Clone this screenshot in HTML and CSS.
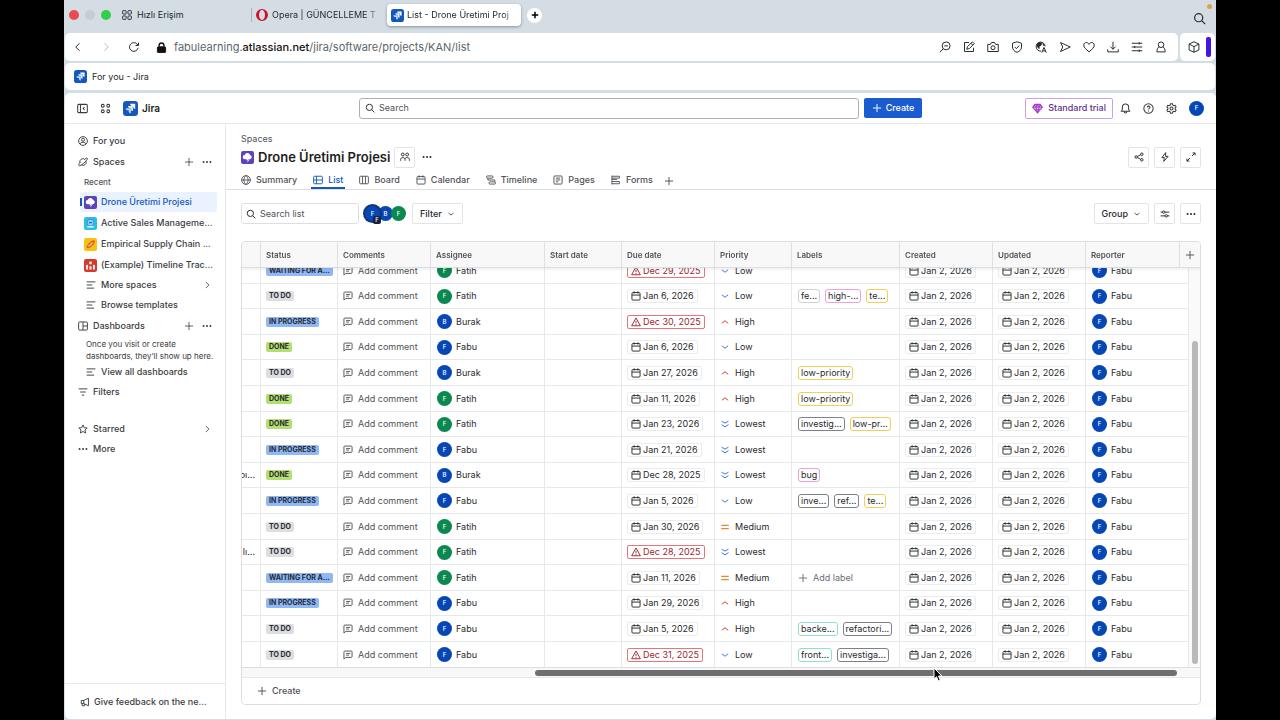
FILE: index.html
```html
<!DOCTYPE html>
<html lang="en">
<head>
    <meta charset="UTF-8">
    <meta name="viewport" content="width=device-width, initial-scale=1.0">
    <title>List - Drone Üretimi Projesi</title>
    <link rel="stylesheet" href="styles.css">
</head>
<body>
    <!-- icon sprite -->
    <svg class="sprite" xmlns="http://www.w3.org/2000/svg">
        <symbol id="i-tiles" viewBox="0 0 16 16"><rect x="1" y="1" width="5.5" height="5.5" rx="1"/><rect x="9.500" y="1" width="5.500" height="5.500" rx="1"/><rect x="1" y="9.500" width="5.500" height="5.500" rx="1"/><rect x="9.500" y="9.500" width="5.500" height="5.500" rx="1"/></symbol>
        <symbol id="i-apps" viewBox="0 0 16 16"><rect x="2" y="2" width="4" height="4" rx="1.500"/><rect x="10" y="2" width="4" height="4" rx="1.500"/><rect x="2" y="10" width="4" height="4" rx="1.500"/><rect x="10" y="10" width="4" height="4" rx="1.500"/></symbol>
        <symbol id="i-jira" viewBox="0 0 16 16"><rect width="16" height="16" rx="3.500" fill="#1558bc" stroke="none"/><g fill="#fff" stroke="none"><path d="M7.600 3h5.400v5.400c-1.300 0-2.200-.9-2.200-2.200v-.9h-1c-1.300 0-2.200-1-2.200-2.300z"/><path d="M5.300 5.300h5.300v5.400c-1.300 0-2.200-1-2.200-2.200v-1h-.9c-1.300 0-2.200-.9-2.200-2.200z" opacity=".85"/><path d="M3 7.600h5.400V13c-1.300 0-2.300-1-2.300-2.200v-1h-.9C3.900 9.800 3 8.900 3 7.600z" opacity=".75"/></g></symbol>
        <symbol id="i-search" viewBox="0 0 16 16"><circle cx="7" cy="7" r="5"/><path d="M11 11l4 4"/></symbol>
        <symbol id="i-left" viewBox="0 0 16 16"><path d="M10 3L5 8l5 5"/></symbol>
        <symbol id="i-right" viewBox="0 0 16 16"><path d="M6 3l5 5-5 5"/></symbol>
        <symbol id="i-down" viewBox="0 0 16 16"><path d="M3 6l5 4 5-4"/></symbol>
        <symbol id="i-up" viewBox="0 0 16 16"><path d="M3 10l5-4 5 4"/></symbol>
        <symbol id="i-lowest" viewBox="0 0 16 16"><path d="M2.500 3.500l5.500 3 5.500-3M2.500 9l5.500 3.500L13.500 9"/></symbol>
        <symbol id="i-equal" viewBox="0 0 16 16"><path d="M2 5.500h12M2 10.500h12"/></symbol>
        <symbol id="i-reload" viewBox="0 0 16 16"><path d="M13.500 9A5.800 5.800 0 1 1 12 4l1.500 1.500M14 2v4h-4"/></symbol>
        <symbol id="i-lock" viewBox="0 0 16 16"><rect x="2" y="7" width="12" height="8.500" rx="1.500" fill="currentColor"/><path d="M4.500 7V5a3.500 3.500 0 0 1 7 0v2" stroke-width="2"/></symbol>
        <symbol id="i-zoomout" viewBox="0 0 16 16"><circle cx="9.500" cy="6.500" r="5.300"/><path d="M5.500 10.500L1 15M7 6.500h5"/></symbol>
        <symbol id="i-note" viewBox="0 0 16 16"><path d="M8 2H2v12h12V9"/><path d="M5 11l1-3.500L12.500 1 15 3.500 8.500 10zM10.500 3l2.500 2.500"/></symbol>
        <symbol id="i-camera" viewBox="0 0 16 16"><path d="M1 4.500h3.500L6 2h4l1.500 2.500H15V14H1z"/><circle cx="8" cy="9" r="2.700"/></symbol>
        <symbol id="i-shield" viewBox="0 0 16 16"><path d="M8 1l6 2v5c0 3.500-2.500 6-6 7-3.500-1-6-3.500-6-7V3z"/><path d="M5 8l2.200 2.200L11 6"/></symbol>
        <symbol id="i-translate" viewBox="0 0 16 16"><path d="M8 13.500A6 6 0 1 1 13.500 7"/><path d="M3 3l4-1.500 2.500 2L8 6 6 7l-.5 3.500L2.500 7zM10.500 3l2.500 3h-2z" fill="currentColor" stroke-width=".6"/><path d="M9 15.500l3-7 3 7M10 13.200h4"/></symbol>
        <symbol id="i-send" viewBox="0 0 16 16"><path d="M2 2l13 6-13 6 3-6z"/></symbol>
        <symbol id="i-heart" viewBox="0 0 16 16"><path d="M8 14.500C4 11 1 8.800 1 5.500 1 3.300 2.600 2 4.300 2 6 2 7.300 3 8 4.500 8.700 3 10 2 11.700 2 13.400 2 15 3.300 15 5.500c0 3.300-3 5.500-7 9z"/></symbol>
        <symbol id="i-download" viewBox="0 0 16 16"><path d="M8 1v10M4.500 7.500L8 11l3.500-3.500M1 11v3.500h14V11"/></symbol>
        <symbol id="i-sliders" viewBox="0 0 16 16"><path d="M1 3h14M1 8h14M1 13h14M11 1.500v3M5 6.500v3M11 11.500v3"/></symbol>
        <symbol id="i-user" viewBox="0 0 16 16"><circle cx="8" cy="5" r="3.700"/><path d="M5.500 8C3.500 9 2.500 11 2.500 14.500h11C13.500 11 12.500 9 10.500 8"/></symbol>
        <symbol id="i-cube" viewBox="0 0 16 16"><path d="M8 1l6.500 3v8L8 15l-6.500-3V4zM1.500 4L8 7.500 14.500 4M8 7.500V15"/></symbol>
        <symbol id="i-collapse" viewBox="0 0 16 16"><rect x="1" y="2" width="14" height="12" rx="1.500"/><path d="M5 2v12M11 6L9 8l2 2"/></symbol>
        <symbol id="i-plus" viewBox="0 0 16 16"><path d="M8 1.500v13M1.500 8h13"/></symbol>
        <symbol id="i-dots" viewBox="0 0 16 16"><g fill="currentColor" stroke="none"><circle cx="2.500" cy="8" r="1.600"/><circle cx="8" cy="8" r="1.600"/><circle cx="13.500" cy="8" r="1.600"/></g></symbol>
        <symbol id="i-gem" viewBox="0 0 16 16"><path d="M4 2h8l3 4-7 8.500L1 6zM1 6h14M5.500 6L8 14l2.500-8L8 2zM4 2l1.500 4M12 2l-1.500 4M3 9h10"/></symbol>
        <symbol id="i-bell" viewBox="0 0 16 16"><path d="M8 1.500c-3 0-4.500 2-4.500 4.500v3L2 12h12l-1.500-3V6c0-2.500-1.500-4.500-4.500-4.500zM6 12.500c0 2.800 4 2.800 4 0"/></symbol>
        <symbol id="i-help" viewBox="0 0 16 16"><circle cx="8" cy="8" r="6.800"/><path d="M6 6.500C6 3.800 10.200 4 10.200 6.300 10.200 8 8 7.800 8 9.500M8 11v1.300"/></symbol>
        <symbol id="i-gear" viewBox="0 0 16 16"><path d="M6.700 1h2.600l.6 2 1.500.9 2-.5 1.300 2.200L13.300 7v2l1.400 1.400-1.300 2.200-2-.5-1.500.9-.6 2H6.700l-.6-2-1.500-.9-2 .5-1.300-2.200L2.700 9V7L1.300 5.600l1.300-2.200 2 .5L6.100 3z"/><circle cx="8" cy="8" r="2.200"/></symbol>
        <symbol id="i-person" viewBox="0 0 16 16"><circle cx="8" cy="8" r="7"/><circle cx="8" cy="6" r="2.400"/><path d="M3.500 13c0-4 9-4 9 0"/></symbol>
        <symbol id="i-planet" viewBox="0 0 16 16"><path d="M3.200 9.500A5 5 0 0 1 11.500 4.300M13 7a5 5 0 0 1-7.500 5.500"/><path d="M3.500 8.500C1 11.500.5 13.500 2 14c2.500.5 12-7.500 13-11 .3-1.700-1.500-1.500-3.500-.3"/></symbol>
        <symbol id="i-lines" viewBox="0 0 16 16"><path d="M1 3h14M1 8h9M1 13h12"/></symbol>
        <symbol id="i-dash" viewBox="0 0 16 16"><rect x="1" y="1.500" width="14" height="13" rx="1.500"/><path d="M8 1.500v13M8 8h7"/></symbol>
        <symbol id="i-filters" viewBox="0 0 16 16"><path d="M1 3h14M3.500 8h9M6 13h4"/></symbol>
        <symbol id="i-star" viewBox="0 0 16 16"><path d="M8 1.500l2 4.400 4.700.5-3.500 3.200 1 4.800L8 12l-4.200 2.400 1-4.800L1.300 6.400 6 5.900z"/></symbol>
        <symbol id="i-horn" viewBox="0 0 16 16"><path d="M2 5.500h4L13.500 2v12L6 10.500H2zM3.500 10.500V14h4v-3M6 5.500v5"/></symbol>
        <symbol id="i-cloud" viewBox="0 0 16 16"><rect width="16" height="16" rx="2.500" fill="#5e42b8" stroke="none"/><path d="M4.800 10a2.500 2.500 0 0 1-.3-5 3.600 3.600 0 0 1 6.700-.2A2.700 2.700 0 0 1 11.300 10z" fill="#fff" stroke="none"/><path d="M8.700 8.500L6.500 11.500h2l-1 3 3-4h-2z" fill="#fff" stroke="none"/></symbol>
        <symbol id="i-sales" viewBox="0 0 16 16"><rect width="16" height="16" rx="2.500" fill="#2bc0dc" stroke="none"/><circle cx="8" cy="7" r="4.300" fill="#8fd3f5" stroke="#1d7afc" stroke-width="1"/><path d="M4 11h8v2H4z" fill="#dff7fc" stroke="none"/><path d="M6 7h4" stroke="#1868db"/></symbol>
        <symbol id="i-supply" viewBox="0 0 16 16"><rect width="16" height="16" rx="2.500" fill="#fbc014" stroke="none"/><path d="M4 12c-1-3 5-9 8.500-8.500C13.500 7 7 13 4 12z" fill="#f5803e" stroke="#bf4a12" stroke-width="1"/><path d="M6 10l4.500-4.500" stroke="#ffe2bd" stroke-width="1"/></symbol>
        <symbol id="i-example" viewBox="0 0 16 16"><rect width="16" height="16" rx="2.500" fill="#d33b30" stroke="none"/><path d="M2.500 13V7.500L5 7v6zM6.700 13V9h2.600v4zM11 13V7l2.500.5V13z" fill="#ffe9e6" stroke="none"/><circle cx="8" cy="5" r="1.800" fill="#ffe9e6" stroke="none"/></symbol>
        <symbol id="i-people" viewBox="0 0 16 16"><circle cx="4.500" cy="4" r="2.300"/><circle cx="11.500" cy="4" r="2.300"/><path d="M1 14v-2c0-4 7-4 7 0v2M8 11c.5-3 7-3 7 1v2"/></symbol>
        <symbol id="i-globe" viewBox="0 0 16 16"><circle cx="8" cy="8" r="7"/><path d="M1 8h14M8 1c-4.500 4-4.500 10 0 14 4.500-4 4.500-10 0-14z"/></symbol>
        <symbol id="i-table" viewBox="0 0 16 16"><rect x="1" y="2" width="14" height="12" rx="1.500"/><path d="M1 8h14M5.500 2v12"/></symbol>
        <symbol id="i-board" viewBox="0 0 16 16"><rect x="1" y="2" width="14" height="12" rx="1.500"/><path d="M5.700 2v12M10.300 2v12"/></symbol>
        <symbol id="i-cal" viewBox="0 0 16 16"><rect x="1.500" y="2.500" width="13" height="12" rx="1.500"/><path d="M1.500 6.500h13M5 .5v3.500M11 .5v3.500"/></symbol>
        <symbol id="i-timeline" viewBox="0 0 16 16"><rect x="1" y="1.500" width="10" height="3.500" rx="1"/><rect x="5" y="11" width="10" height="3.500" rx="1"/><path d="M3 5v3h11v3"/></symbol>
        <symbol id="i-page" viewBox="0 0 16 16"><rect x="1.500" y="1.500" width="13" height="13" rx="1.500"/><path d="M4.500 5h7M4.500 8h7M4.500 11h4"/></symbol>
        <symbol id="i-form" viewBox="0 0 16 16"><path d="M1.500 1v14M1.500 2h12v3h-12M1.500 7h8M1.500 10.500h12v3.500h-12"/></symbol>
        <symbol id="i-share" viewBox="0 0 16 16"><circle cx="3.500" cy="8" r="2"/><circle cx="12.500" cy="3.500" r="2"/><circle cx="12.500" cy="12.500" r="2"/><path d="M5.500 7l5-2.500M5.500 9l5 2.500"/></symbol>
        <symbol id="i-bolt" viewBox="0 0 16 16"><path d="M9 1L3 9h4l-1 6 7-8H9z"/></symbol>
        <symbol id="i-expand" viewBox="0 0 16 16"><path d="M9.500 6.500L14.500 1.500M10.500 1.500h4v4M6.500 9.500L1.500 14.500M1.500 10.500v4h4"/></symbol>
        <symbol id="i-tune" viewBox="0 0 16 16"><path d="M1 5h3M8 5h7M1 11h7M12 11h3"/><circle cx="6" cy="5" r="2"/><circle cx="10" cy="11" r="2"/></symbol>
        <symbol id="i-comment" viewBox="0 0 16 16"><path d="M1.500 14.500V3c0-.8.500-1.300 1.300-1.300h10.400c.8 0 1.300.5 1.300 1.300v7.500c0 .8-.5 1.300-1.300 1.300H4.300zM5 5.500h6.500M5 8.200h4.500"/></symbol>
        <symbol id="i-warn" viewBox="0 0 16 16"><path d="M8 1.500l7 12.500H1zM8 6v4M8 11v1.500"/></symbol>
    </svg>

    <header class="tabs-bar">
        <div class="lights"><i class="red"></i><i></i><i class="green"></i></div>
        <a class="browser-tab" href="#"><svg class="icon"><use href="#i-tiles"/></svg><span>Hızlı Erişim</span></a>
        <a class="browser-tab divided" href="#"><i class="opera"></i><span>Opera | GÜNCELLEME T</span></a>
        <a class="browser-tab active" href="#"><svg class="icon logo"><use href="#i-jira"/></svg><span>List - Drone Üretimi Proj</span></a>
        <button class="new-tab" aria-label="New tab"><svg class="icon"><use href="#i-plus"/></svg></button>
        <button class="tab-search" aria-label="Search tabs"><svg class="icon"><use href="#i-search"/></svg></button>
        <i class="mic-dot"></i>
    </header>

    <div class="address-row">
        <div class="address">
            <button aria-label="Back"><svg class="icon"><use href="#i-left"/></svg></button>
            <button class="off" aria-label="Forward"><svg class="icon"><use href="#i-right"/></svg></button>
            <button aria-label="Reload"><svg class="icon"><use href="#i-reload"/></svg></button>
            <svg class="icon lock"><use href="#i-lock"/></svg>
            <div class="url">fabulearning.<b>atlassian.net</b>/jira/software/projects/KAN/list</div>
            <div class="tools" id="tools"></div>
        </div>
        <div class="address-side">
            <button aria-label="Extensions"><svg class="icon"><use href="#i-cube"/></svg></button>
            <i class="side-bar"></i>
        </div>
    </div>

    <nav class="bookmarks">
        <a href="#"><svg class="icon logo"><use href="#i-jira"/></svg>For you - Jira</a>
    </nav>

    <div class="app">
        <header class="app-header">
            <div class="header-left">
                <button aria-label="Collapse sidebar"><svg class="icon"><use href="#i-collapse"/></svg></button>
                <button aria-label="Switch apps"><svg class="icon"><use href="#i-apps"/></svg></button>
                <a class="brand" href="#"><svg class="icon"><use href="#i-jira"/></svg>Jira</a>
            </div>
            <label class="field global-search"><svg class="icon"><use href="#i-search"/></svg><input type="text" placeholder="Search" aria-label="Search"></label>
            <button class="create"><svg class="icon"><use href="#i-plus"/></svg>Create</button>
            <div class="header-right">
                <button class="trial"><svg class="icon"><use href="#i-gem"/></svg>Standard trial</button>
                <button aria-label="Notifications"><svg class="icon"><use href="#i-bell"/></svg></button>
                <button aria-label="Help"><svg class="icon"><use href="#i-help"/></svg></button>
                <button aria-label="Settings"><svg class="icon"><use href="#i-gear"/></svg></button>
                <span class="avatar">F</span>
            </div>
        </header>

        <div class="app-body">
            <aside class="sidebar">
                <nav class="side-nav">
                    <a class="item" href="#"><svg class="icon"><use href="#i-person"/></svg>For you</a>
                    <div class="item"><svg class="icon"><use href="#i-planet"/></svg><a href="#">Spaces</a>
                        <span class="actions"><button aria-label="Create space"><svg class="icon"><use href="#i-plus"/></svg></button><button aria-label="More actions"><svg class="icon"><use href="#i-dots"/></svg></button></span>
                    </div>
                    <div class="recent">Recent</div>
                    <div class="projects">
                        <a class="item selected" href="#"><svg class="icon"><use href="#i-cloud"/></svg>Drone Üretimi Projesi</a>
                        <a class="item" href="#"><svg class="icon"><use href="#i-sales"/></svg>Active Sales Manageme...</a>
                        <a class="item" href="#"><svg class="icon"><use href="#i-supply"/></svg>Empirical Supply Chain ...</a>
                        <a class="item" href="#"><svg class="icon"><use href="#i-example"/></svg>(Example) Timeline Trac...</a>
                    </div>
                    <a class="item sub" href="#"><svg class="icon"><use href="#i-lines"/></svg>More spaces<span class="actions"><svg class="icon"><use href="#i-right"/></svg></span></a>
                    <a class="item sub" href="#"><svg class="icon"><use href="#i-lines"/></svg>Browse templates</a>
                    <div class="item"><svg class="icon"><use href="#i-dash"/></svg><a href="#">Dashboards</a>
                        <span class="actions"><button aria-label="Create dashboard"><svg class="icon"><use href="#i-plus"/></svg></button><button aria-label="More actions"><svg class="icon"><use href="#i-dots"/></svg></button></span>
                    </div>
                    <p class="hint">Once you visit or create dashboards, they’ll show up here.</p>
                    <a class="item sub" href="#"><svg class="icon"><use href="#i-lines"/></svg>View all dashboards</a>
                    <a class="item" href="#"><svg class="icon"><use href="#i-filters"/></svg>Filters</a>
                    <div class="nav-group">
                        <a class="item" href="#"><svg class="icon"><use href="#i-star"/></svg>Starred<span class="actions"><svg class="icon"><use href="#i-right"/></svg></span></a>
                        <a class="item" href="#"><svg class="icon"><use href="#i-dots"/></svg>More</a>
                    </div>
                </nav>
                <a class="feedback" href="#"><svg class="icon"><use href="#i-horn"/></svg>Give feedback on the ne...</a>
            </aside>

            <main>
                <div class="crumb"><a href="#">Spaces</a></div>
                <div class="title-row">
                    <svg class="icon space-icon"><use href="#i-cloud"/></svg>
                    <h1>Drone Üretimi Projesi</h1>
                    <button class="btn square" aria-label="Team"><svg class="icon"><use href="#i-people"/></svg></button>
                    <button class="more" aria-label="More"><svg class="icon"><use href="#i-dots"/></svg></button>
                    <div class="right">
                        <button class="btn square" aria-label="Share"><svg class="icon"><use href="#i-share"/></svg></button>
                        <button class="btn square" aria-label="Automation"><svg class="icon"><use href="#i-bolt"/></svg></button>
                        <button class="btn square" aria-label="Full screen"><svg class="icon"><use href="#i-expand"/></svg></button>
                    </div>
                </div>
                <nav class="view-tabs">
                    <a href="#"><svg class="icon"><use href="#i-globe"/></svg>Summary</a>
                    <a class="active" href="#"><svg class="icon"><use href="#i-table"/></svg>List</a>
                    <a href="#"><svg class="icon"><use href="#i-board"/></svg>Board</a>
                    <a href="#"><svg class="icon"><use href="#i-cal"/></svg>Calendar</a>
                    <a href="#"><svg class="icon"><use href="#i-timeline"/></svg>Timeline</a>
                    <a href="#"><svg class="icon"><use href="#i-page"/></svg>Pages</a>
                    <a href="#"><svg class="icon"><use href="#i-form"/></svg>Forms</a>
                    <button aria-label="Add view"><svg class="icon"><use href="#i-plus"/></svg></button>
                </nav>

                <div class="toolbar">
                    <label class="field list-search"><svg class="icon"><use href="#i-search"/></svg><input type="text" placeholder="Search list" aria-label="Search list"></label>
                    <div class="people">
                        <span class="avatar picked">F<em>F</em></span><span class="avatar">B</span><span class="avatar green">F</span>
                    </div>
                    <button class="btn">Filter<svg class="icon small"><use href="#i-down"/></svg></button>
                    <div class="right">
                        <button class="btn">Group<svg class="icon small"><use href="#i-down"/></svg></button>
                        <button class="btn square" aria-label="View settings"><svg class="icon"><use href="#i-tune"/></svg></button>
                        <button class="btn square" aria-label="More"><svg class="icon"><use href="#i-dots"/></svg></button>
                    </div>
                </div>

                <section class="list">
                    <div class="scroller" id="scroller">
                        <table>
                            <colgroup>
                                <col class="c-first"><col class="c-status"><col class="c-date"><col class="c-assignee"><col class="c-status"><col class="c-date"><col class="c-status"><col class="c-labels"><col class="c-date"><col class="c-date"><col><col class="c-add">
                            </colgroup>
                            <thead>
                                <tr><th></th><th>Status</th><th>Comments</th><th>Assignee</th><th>Start date</th><th>Due date</th><th>Priority</th><th>Labels</th><th>Created</th><th>Updated</th><th>Reporter</th><th class="add"><button aria-label="Add column"><svg class="icon"><use href="#i-plus"/></svg></button></th></tr>
                            </thead>
                            <tbody id="rows"></tbody>
                        </table>
                    </div>
                    <div class="v-track"><i></i></div>
                    <div class="h-track"><i></i></div>
                    <div class="list-footer"><button><svg class="icon"><use href="#i-plus"/></svg>Create</button></div>
                    <svg class="pointer" viewBox="0 0 10 15"><path d="M1 1v11l2.500-2.300L5.200 13.800l2-.9L5.500 9H9z"/></svg>
                </section>
            </main>
        </div>
    </div>

    <script>
        const icon = (name, cls = '') => `<svg class="icon ${cls}"><use href="#i-${name}"/></svg>`;

        const tools = ['zoomout', 'note', 'camera', 'shield', 'translate', 'send', 'heart', 'download', 'sliders', 'user'];
        document.getElementById('tools').innerHTML = tools
            .map(name => `<button aria-label="${name}">${icon(name)}</button>`).join('');

        // status, assignee, due date, overdue, priority, labels as "colour:text", end of the summary
        const issues = [
            ['WAITING FOR A...', 'Fatih', 'Dec 29, 2025', true, 'Low', []],
            ['TO DO', 'Fatih', 'Jan 6, 2026', false, 'Low', ['plain:fe...', 'pink:high-...', 'yellow:te...']],
            ['IN PROGRESS', 'Burak', 'Dec 30, 2025', true, 'High', []],
            ['DONE', 'Fabu', 'Jan 6, 2026', false, 'Low', []],
            ['TO DO', 'Burak', 'Jan 27, 2026', false, 'High', ['yellow:low-priority']],
            ['DONE', 'Fatih', 'Jan 11, 2026', false, 'High', ['yellow:low-priority']],
            ['DONE', 'Fatih', 'Jan 23, 2026', false, 'Lowest', ['dark:investig...', 'yellow:low-pr...']],
            ['IN PROGRESS', 'Fabu', 'Jan 21, 2026', false, 'Lowest', []],
            ['DONE', 'Burak', 'Dec 28, 2025', false, 'Lowest', ['pink:bug'], 'oı...'],
            ['IN PROGRESS', 'Fabu', 'Jan 5, 2026', false, 'Low', ['dark:inve...', 'dark:ref...', 'yellow:te...']],
            ['TO DO', 'Fatih', 'Jan 30, 2026', false, 'Medium', []],
            ['TO DO', 'Fatih', 'Dec 28, 2025', true, 'Lowest', [], 'lı...'],
            ['WAITING FOR A...', 'Fatih', 'Jan 11, 2026', false, 'Medium', null],
            ['IN PROGRESS', 'Fabu', 'Jan 29, 2026', false, 'High', []],
            ['TO DO', 'Fabu', 'Jan 5, 2026', false, 'High', ['teal:backe...', 'dark:refactori...']],
            ['TO DO', 'Fabu', 'Dec 31, 2025', true, 'Low', ['teal:front...', 'dark:investiga...']]
        ];

        const statusClass = { 'TO DO': 'todo', 'DONE': 'done' };
        const priorityIcon = { Low: 'down', High: 'up', Lowest: 'lowest', Medium: 'equal' };

        const person = name => `<div class="cell person"><span class="avatar ${name === 'Fatih' ? 'green' : ''}">${name[0]}</span>${name}</div>`;
        const date = (text, late) => `<div class="cell"><span class="date ${late ? 'late' : ''}">${icon(late ? 'warn' : 'cal')}${text}</span></div>`;

        function labels(list) {
            if (!list) return `<button class="add-label">${icon('plus')}Add label</button>`;
            return list.map(item => {
                const [colour, text] = item.split(':');
                return `<span class="label ${colour}">${text}</span>`;
            }).join('');
        }

        document.getElementById('rows').innerHTML = issues.map(([status, who, due, late, priority, tags, tail = '']) => `
            <tr>
                <td><div class="tail">${tail}</div></td>
                <td><div class="cell"><span class="lozenge ${statusClass[status] || 'progress'}">${status}</span></div></td>
                <td><button class="cell comment">${icon('comment')}Add comment</button></td>
                <td>${person(who)}</td>
                <td></td>
                <td>${date(due, late)}</td>
                <td><div class="cell priority ${priority.toLowerCase()}">${icon(priorityIcon[priority])}${priority}</div></td>
                <td><div class="cell labels">${labels(tags)}</div></td>
                <td>${date('Jan 2, 2026')}</td>
                <td>${date('Jan 2, 2026')}</td>
                <td colspan="2">${person('Fabu')}</td>
            </tr>`).join('');

        document.getElementById('scroller').scrollTop = 10;
    </script>
</body>
</html>
```
FILE: styles.css
```css
* {
    box-sizing: border-box;
}

body {
    font-family: Inter, "Noto Sans", sans-serif;
    font-size: 9px;
    line-height: 12px;
    color: #292a2e;
    background: linear-gradient(90deg, #000 5%, #d3dde3 5%, #d3dde3 95%, #000 95%);
    margin: 0;
    padding: 0 5%;
    height: 100vh;
    display: flex;
    flex-direction: column;
    overflow: hidden;
}

a {
    color: inherit;
    text-decoration: none;
}

button,
input {
    font: inherit;
    color: inherit;
    background: none;
    border: none;
    padding: 0;
    margin: 0;
}

button {
    display: flex;
    align-items: center;
    justify-content: center;
}

.sprite {
    display: none;
}

.icon {
    width: 10px;
    height: 10px;
    flex: none;
    fill: none;
    stroke: currentColor;
    stroke-width: 1.5;
}

.icon.small {
    width: 8px;
    height: 8px;
}

.icon.logo {
    width: 13px;
    height: 13px;
}

/* browser */
.tabs-bar {
    display: flex;
    align-items: center;
    height: 33px;
    padding: 0 4px 3px 5px;
    flex: none;
    position: relative;
}

.lights {
    display: flex;
    gap: 6px;
    margin-right: 6px;
}

.lights i {
    width: 10px;
    height: 10px;
    border-radius: 50%;
    background: #c6cccf;
}

.lights .red {
    background: #ec4a4c;
}

.lights .green {
    background: #2fd04b;
}

.browser-tab {
    display: flex;
    align-items: center;
    gap: 5px;
    width: 134px;
    height: 22px;
    padding: 0 5px;
    color: #24292c;
}

.browser-tab span {
    flex: 1;
    white-space: nowrap;
}

.browser-tab.divided {
    gap: 4px;
}

.browser-tab.divided span,
.browser-tab.active span {
    -webkit-mask-image: linear-gradient(90deg, #000 88%, transparent);
    mask-image: linear-gradient(90deg, #000 88%, transparent);
}

.browser-tab.divided::before {
    content: "";
    width: 1px;
    height: 14px;
    margin-left: -5px;
    background: #aab3b8;
}

.browser-tab.active {
    margin-left: 2px;
    background: #fff;
    border-radius: 4px;
    padding: 0 4px;
    gap: 3px;
    box-shadow: 0 1px 3px rgba(0, 0, 0, 0.35);
}

.opera {
    width: 12px;
    height: 12px;
    border: solid #d0112b;
    border-width: 1px 3px;
    border-radius: 50%;
}

.new-tab {
    width: 15px;
    height: 15px;
    margin-left: 6px;
    border-radius: 50%;
    background: #fff;
    color: #000;
}

.new-tab .icon {
    width: 8px;
    height: 8px;
    stroke-width: 3;
}

.tab-search {
    margin: 6px 6px 0 auto;
}

.tab-search .icon {
    width: 13px;
    height: 13px;
}

.mic-dot {
    position: absolute;
    top: 4px;
    right: 4px;
    width: 5px;
    height: 5px;
    border-radius: 50%;
    background: #dfa04e;
}

.address-row {
    display: flex;
    gap: 2px;
    height: 28px;
    margin: 0 1px 2px;
    flex: none;
}

.address,
.address-side {
    display: flex;
    align-items: center;
    background: #fff;
    border-radius: 5px;
    color: #24292c;
}

.address {
    flex: 1;
    gap: 16px;
    padding: 0 11px 0 7px;
}

.address .icon,
.address-side .icon {
    width: 12px;
    height: 12px;
    stroke-width: 1.3;
}

.address .off {
    color: #b4b9bc;
}

.address .lock {
    width: 11px;
    height: 11px;
    color: #111;
}

.url {
    flex: 1;
    font-size: 11px;
    line-height: 16px;
    margin-left: -9px;
    color: #5d666b;
}

.url b {
    font-weight: 500;
    color: #111;
}

.tools {
    display: flex;
    gap: 12px;
}

.address-side {
    gap: 6px;
    width: 35px;
    padding-left: 8px;
}

.side-bar {
    width: 5px;
    height: 20px;
    border-radius: 2px;
    background: #4417e0;
}

.bookmarks {
    display: flex;
    align-items: center;
    height: 27px;
    margin: 0 1px 3px;
    padding: 0 9px;
    background: #fff;
    border-radius: 5px;
    flex: none;
}

.bookmarks a {
    display: flex;
    align-items: center;
    gap: 5px;
    color: #24292c;
}

/* jira shell */
.app {
    flex: 1;
    display: flex;
    flex-direction: column;
    min-height: 0;
    margin: 0 0 1px 1px;
    background: #fff;
    border-radius: 5px;
    overflow: hidden;
}

.app-header {
    display: flex;
    align-items: center;
    gap: 5px;
    height: 31px;
    padding: 0 12px;
    border-bottom: 1px solid #e7e8ea;
    flex: none;
}

.header-left,
.header-right {
    flex: 1;
    display: flex;
    align-items: center;
    gap: 12px;
    color: #3b3d42;
}

.header-right {
    justify-content: flex-end;
}

.header-left .icon,
.header-right .icon {
    width: 11px;
    height: 11px;
}

.brand {
    display: flex;
    align-items: center;
    gap: 4px;
    font-size: 10px;
    font-weight: 600;
    color: #1e1f21;
}

.header-left .brand .icon {
    width: 15px;
    height: 15px;
}

.field {
    display: flex;
    align-items: center;
    gap: 4px;
    height: 21px;
    padding: 0 5px;
    border: 1px solid #dddee1;
    border-radius: 3px;
}

.field input {
    flex: 1;
    min-width: 0;
    outline: none;
}

.field input::placeholder {
    color: #505258;
    opacity: 1;
}

.global-search {
    flex: 0 1 500px;
    border-color: #aeb0b5;
}

.create {
    gap: 4px;
    width: 58px;
    height: 20px;
    color: #fff;
    font-weight: 500;
    background: #1b5bd0;
    border-radius: 2px;
}

.trial {
    gap: 5px;
    height: 21px;
    margin-right: -5px;
    padding: 0 6px;
    border: 1px solid #cf9fe0;
    border-radius: 2px;
    color: #65308c;
    font-weight: 500;
}

.trial .icon {
    color: #a63fc4;
}

.avatar {
    display: inline-flex;
    align-items: center;
    justify-content: center;
    width: 15px;
    height: 15px;
    flex: none;
    border-radius: 50%;
    background: #0747b5;
    color: #fff;
    font-size: 6px;
    font-style: normal;
    font-weight: 500;
}

.avatar.green {
    background: #0b8750;
}

.app-body {
    flex: 1;
    display: flex;
    min-height: 0;
}

.sidebar {
    display: flex;
    flex-direction: column;
    width: 161px;
    flex: none;
    border-right: 1px solid #e7e8ea;
    font-weight: 500;
    color: #3b3d42;
}

.side-nav {
    display: flex;
    flex-direction: column;
    flex: 1;
    padding: 7px 8px 0;
}

.item {
    display: flex;
    align-items: center;
    gap: 5px;
    height: 20px;
    padding: 0 5px;
    flex: none;
    white-space: nowrap;
}

.side-nav > div.item {
    margin-top: 1px;
}

.item.sub {
    padding-left: 13px;
}

.actions {
    display: flex;
    gap: 8px;
    margin-left: auto;
}

.actions .icon {
    stroke-width: 1.3;
}

.recent {
    height: 20px;
    padding: 4px 11px;
    font-size: 8px;
    color: #505258;
}

.projects {
    display: flex;
    flex-direction: column;
    gap: 1px;
    margin-left: 7px;
}

.projects .item {
    gap: 4px;
    padding: 0 4px;
    border-radius: 2px;
}

.projects .icon {
    width: 13px;
    height: 13px;
}

.projects .selected {
    background: #e9f2fe;
    color: #1558bc;
    padding-left: 0;
}

.projects .selected::before {
    content: "";
    width: 2px;
    height: 8px;
    margin-right: -2px;
    background: #1558bc;
}

.hint {
    margin: 2px -4px 0 13px;
    font-size: 8px;
    font-weight: 400;
    color: #3b3d42;
}

.nav-group {
    margin-top: 17px;
}

.feedback {
    display: flex;
    align-items: center;
    gap: 4px;
    height: 36px;
    padding: 0 15px;
    border-top: 1px solid #e7e8ea;
}

/* project page */
main {
    flex: 1;
    min-width: 0;
    display: flex;
    flex-direction: column;
    padding: 9px 15px 14px;
}

.crumb {
    color: #505258;
}

.title-row {
    display: flex;
    align-items: center;
    height: 24px;
    gap: 4px;
    flex: none;
}

.space-icon {
    width: 13px;
    height: 13px;
}

h1 {
    margin: 0;
    font-size: 13px;
    line-height: 18px;
    font-weight: 600;
    color: #1e1f21;
}

.more {
    margin-left: 3px;
}

.right {
    display: flex;
    gap: 5px;
    margin-left: auto;
}

.btn {
    gap: 5px;
    height: 21px;
    padding: 0 7px;
    border: 1px solid #e3e4e7;
    border-radius: 2px;
    font-weight: 500;
}

.btn.square {
    width: 21px;
    padding: 0;
}

.view-tabs {
    display: flex;
    gap: 12px;
    height: 21px;
    margin: 0 -15px;
    padding: 3px 13px 0;
    border-bottom: 1px solid #dddee1;
    font-weight: 500;
    color: #505258;
    flex: none;
}

.view-tabs a {
    display: flex;
    align-items: center;
    gap: 5px;
    padding: 0 2px;
    border-bottom: 2px solid transparent;
}

.view-tabs .active {
    color: #1558bc;
    border-color: #1558bc;
}

.view-tabs button {
    margin-left: -3px;
}

.toolbar {
    display: flex;
    align-items: center;
    height: 47px;
    margin-bottom: 4px;
    flex: none;
}

.list-search {
    width: 118px;
    padding-left: 4px;
}

.list-search .icon {
    color: #1e1f21;
}

.people {
    display: flex;
    margin: 0 6px;
}

.people .avatar {
    margin-left: -2px;
}

.people .picked {
    position: relative;
    margin-left: 0;
    box-shadow: 0 0 0 2px #14347a;
}

.people em {
    position: absolute;
    right: -1px;
    bottom: -3px;
    width: 8px;
    height: 8px;
    border-radius: 2px;
    background: #14223f;
    font-style: normal;
    line-height: 8px;
    text-align: center;
}

/* issue list */
.list {
    position: relative;
    flex: 1;
    min-height: 0;
    display: flex;
    flex-direction: column;
    border: 1px solid #dddee1;
    border-radius: 4px;
}

.scroller {
    flex: 1;
    min-height: 0;
    overflow: hidden;
    border-radius: 4px 4px 0 0;
}

table {
    width: 100%;
    table-layout: fixed;
    border-collapse: separate;
    border-spacing: 0;
}

.c-first { width: 19px; }
.c-status { width: 77px; }
.c-date { width: 93px; }
.c-assignee { width: 114px; }
.c-labels { width: 108px; }
.c-add { width: 20px; }

th {
    position: sticky;
    top: 0;
    z-index: 1;
    height: 26px;
    padding: 0 5px;
    text-align: left;
    font-size: 8px;
    font-weight: 600;
    color: #505258;
    background: #f8f8f8;
    border-right: 1px solid #e3e4e7;
    border-bottom: 1px solid #dddee1;
    box-shadow: 0 2px 2px rgba(30, 31, 33, 0.06);
}

th.add {
    padding: 0;
    border-right: none;
}

th.add button {
    width: 100%;
}

td {
    height: 26px;
    padding: 0;
    border-right: 1px solid #e7e8ea;
    border-bottom: 1px solid #e7e8ea;
    white-space: nowrap;
}

tr:nth-child(5n + 2) td,
tr:nth-child(5n + 4) td {
    height: 25px;
}

.cell {
    display: flex;
    align-items: center;
    height: 15px;
    padding: 0 0 0 5px;
}

.tail {
    display: flex;
    justify-content: flex-end;
    overflow: hidden;
    padding-right: 5px;
}

.lozenge {
    height: 10px;
    padding: 0 3px;
    border-radius: 2px;
    font-size: 7px;
    line-height: 10px;
    font-weight: 700;
    color: #292a2e;
}

.todo { background: #dddee1; }
.progress { background: #8fb8f6; }
.done { background: #b3df72; }

.comment {
    gap: 5px;
    color: #505258;
}

.person {
    gap: 4px;
    padding-left: 6px;
}

.date {
    display: flex;
    align-items: center;
    gap: 2px;
    height: 14px;
    padding: 0 3px;
    border: 1px solid #ebecee;
    border-radius: 2px;
}

.date.late {
    color: #9a2530;
    border-color: #e2777a;
}

.priority {
    gap: 5px;
}

.low .icon,
.lowest .icon {
    color: #2f6fd0;
}

.high .icon {
    color: #c9372c;
}

.medium .icon {
    color: #e08a2c;
    stroke-width: 2;
}

.labels {
    gap: 5px;
    padding-left: 6px;
}

.label {
    height: 14px;
    padding: 0 2px;
    border: 1px solid #d0d2d6;
    border-radius: 3px;
    line-height: 12px;
}

.label.pink { border-color: #e9a3d6; }
.label.yellow { border-color: #eed05a; }
.label.teal { border-color: #8fe0cd; }
.label.dark { border-color: #7d818a; }

.add-label {
    gap: 5px;
    color: #6b6e76;
}

.v-track {
    position: absolute;
    top: 26px;
    right: 0;
    bottom: 37px;
    width: 12px;
    padding: 73px 2px 3px 3px;
    background: #fafafa;
    border-left: 1px solid #e7e8ea;
    display: flex;
}

.v-track i {
    flex: 1;
    border-radius: 3px;
    background: #b9b9b9;
}

.h-track {
    height: 11px;
    padding: 2px 0;
    background: #f8f8f8;
    border-top: 1px solid #dddee1;
    border-bottom: 1px solid #e7e8ea;
    flex: none;
}

.h-track i {
    display: block;
    width: 67%;
    height: 6px;
    margin-left: auto;
    margin-right: 23px;
    border-radius: 3px;
    background: #6f6f6f;
}

.list-footer {
    display: flex;
    align-items: center;
    height: 26px;
    padding: 0 15px;
    flex: none;
    font-weight: 500;
    color: #505258;
}

.list-footer button {
    gap: 5px;
}

.pointer {
    position: absolute;
    left: 691px;
    bottom: 22px;
    width: 10px;
    height: 15px;
    z-index: 2;
    fill: #000;
    stroke: #fff;
}
```
